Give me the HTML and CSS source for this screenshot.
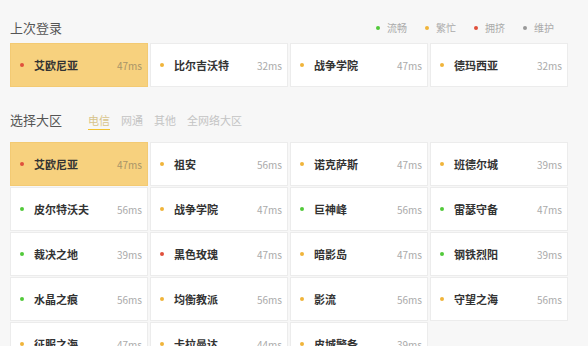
FILE: index.html
```html
<!DOCTYPE html>
<html lang="zh-CN">
<head>
  <meta charset="UTF-8" />
  <meta name="viewport" content="width=device-width, initial-scale=1" />
  <title>选择大区</title>
  <link rel="stylesheet" href="styles.css">
</head>
<body>
  <div class="section-head first">
    <h3>上次登录</h3>
    <ul class="legend">
      <li><i class="dot green"></i>流畅</li>
      <li><i class="dot orange"></i>繁忙</li>
      <li><i class="dot red"></i>拥挤</li>
      <li><i class="dot gray"></i>维护</li>
    </ul>
  </div>
  <div class="grid">
    <div class="card active"><i class="dot red"></i><span class="name">艾欧尼亚</span><span class="ping">47ms</span></div>
    <div class="card"><i class="dot orange"></i><span class="name">比尔吉沃特</span><span class="ping">32ms</span></div>
    <div class="card"><i class="dot orange"></i><span class="name">战争学院</span><span class="ping">47ms</span></div>
    <div class="card"><i class="dot orange"></i><span class="name">德玛西亚</span><span class="ping">32ms</span></div>
  </div>

  <div class="section-head second">
    <h3>选择大区</h3>
    <ul class="tabs">
      <li class="on">电信</li>
      <li>网通</li>
      <li>其他</li>
      <li>全网络大区</li>
    </ul>
  </div>
  <div class="grid" id="servers"></div>

  <script>
    const servers = [
      ['艾欧尼亚', 47, 'red', true], ['祖安', 56, 'orange'], ['诺克萨斯', 47, 'orange'], ['班德尔城', 39, 'orange'],
      ['皮尔特沃夫', 56, 'green'], ['战争学院', 47, 'orange'], ['巨神峰', 56, 'green'], ['雷瑟守备', 47, 'green'],
      ['裁决之地', 39, 'green'], ['黑色玫瑰', 47, 'red'], ['暗影岛', 47, 'orange'], ['钢铁烈阳', 39, 'green'],
      ['水晶之痕', 56, 'green'], ['均衡教派', 56, 'orange'], ['影流', 56, 'orange'], ['守望之海', 56, 'orange'],
      ['征服之海', 47, 'orange'], ['卡拉曼达', 44, 'orange'], ['皮城警备', 39, 'orange']
    ];

    let html = '';
    servers.forEach(s => {
      html += `<div class="card${s[3] ? ' active' : ''}"><i class="dot ${s[2]}"></i>` +
              `<span class="name">${s[0]}</span><span class="ping">${s[1]}ms</span></div>`;
    });
    document.getElementById('servers').innerHTML = html;
  </script>
</body>
</html>
```

FILE: styles.css
```css
body {
  margin: 0;
  padding: 0 10px;
  background-color: #f7f7f7;
  font-family: "Noto Sans CJK SC", "Noto Sans", sans-serif;
  overflow: hidden;
}
.section-head {
  display: flex;
  align-items: center;
  justify-content: space-between;
  height: 20px;
}
.section-head.first {
  margin-top: 18px;
  margin-bottom: 5px;
}
.section-head.second {
  margin-top: 23px;
  margin-bottom: 12px;
  justify-content: flex-start;
}
h3 {
  margin: 0;
  font-size: 13px;
  font-weight: normal;
  color: #555;
  line-height: 20px;
}
ul {
  list-style: none;
  margin: 0;
  padding: 0;
  display: flex;
}
.legend {
  gap: 18px;
  margin-right: 24px;
}
.legend li {
  display: flex;
  align-items: center;
  font-size: 10px;
  color: #aaa;
  line-height: 14px;
}
.legend .dot {
  margin-right: 7px;
}
.tabs {
  margin-left: 26px;
  gap: 11px;
}
.tabs li {
  font-size: 11px;
  color: #c4c4c4;
  line-height: 16px;
  padding-bottom: 1px;
  border-bottom: 1px solid transparent;
  margin-top: 2px;
}
.tabs li.on {
  color: #d8c48a;
  border-bottom-color: #f2c230;
}
.grid {
  display: grid;
  grid-template-columns: repeat(4, 138px);
  column-gap: 2px;
  row-gap: 1px;
}
.card {
  box-sizing: border-box;
  height: 44px;
  display: flex;
  align-items: center;
  padding: 0 5px 0 9px;
  background-color: #fff;
  border: 1px solid #ececec;
}
.card.active {
  background-color: #f7d17e;
  border-color: #f3ca73;
}
.dot {
  display: inline-block;
  width: 4px;
  height: 4px;
  border-radius: 50%;
  flex: none;
}
.card .dot {
  margin-right: 10px;
}
.green { background-color: #52c93a; }
.orange { background-color: #f0b43a; }
.red { background-color: #e0503c; }
.gray { background-color: #999; }
.name {
  flex: 1;
  font-size: 11px;
  font-weight: bold;
  color: #333;
  white-space: nowrap;
}
.ping {
  font-size: 10px;
  color: #aaa;
}
.card.active .ping {
  color: #a89468;
}
```
